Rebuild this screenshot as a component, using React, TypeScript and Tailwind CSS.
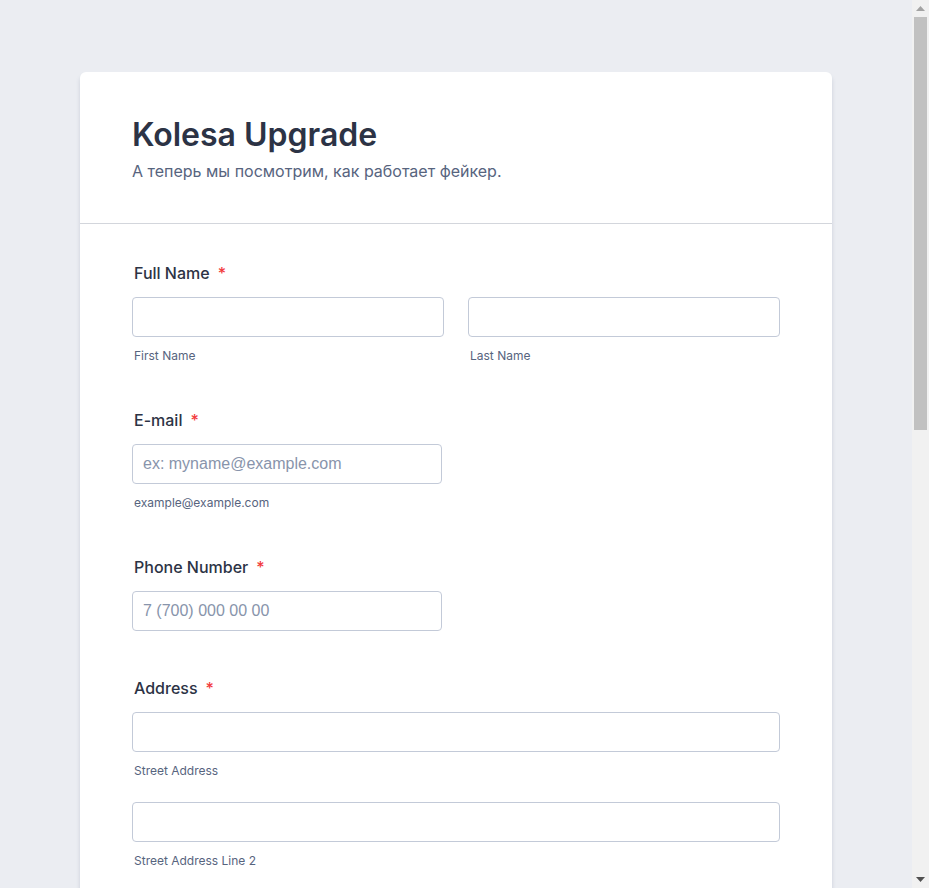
import React from "react";

type Part = { sub?: string; placeholder?: string; width?: string };

function Field({
  label,
  rows,
  required = true,
  className = "",
}: {
  label: string;
  rows: Part[][];
  required?: boolean;
  className?: string;
}) {
  return (
    <li className={`flex flex-col ${className}`}>
      <label className="pl-[2px] text-[16px] leading-[20px] font-medium text-[#2c3345]">
        {label}
        {required && <span className="ml-[8px] text-[#f23a3c]">*</span>}
      </label>
      <div className="mt-[14px] flex flex-col gap-[22px]">
        {rows.map((row, i) => (
          <div key={i} className="flex gap-6">
            {row.map((p, j) => (
              <div key={j} className={p.width ?? "flex-1"}>
                <input
                  type="text"
                  placeholder={p.placeholder}
                  className="block h-10 w-full rounded-[4px] border border-[#c3cad8] bg-white px-[10px] text-[16px] text-[#2c3345] placeholder:text-[#8894ab] font-['Liberation_Sans',Arial,sans-serif] outline-none"
                />
                {p.sub && (
                  <div className="mt-[10px] pl-[2px] text-[12px] leading-[18px] text-[#57647e]">{p.sub}</div>
                )}
              </div>
            ))}
          </div>
        ))}
      </div>
    </li>
  );
}

// полоса прокрутки, как в браузере на скриншоте
function Scrollbar() {
  return (
    <div className="fixed top-0 right-0 flex h-screen w-[17px] flex-col bg-[#f1f1f1]">
      <div className="flex h-[17px] items-center justify-center">
        <svg width="9" height="5" viewBox="0 0 9 5">
          <path d="M4.5 0 L9 5 L0 5 Z" fill="#a3a3a3" />
        </svg>
      </div>
      <div className="mx-[2px] h-[413px] bg-[#c1c1c1]" />
      <div className="flex-1" />
      <div className="flex h-[17px] items-center justify-center">
        <svg width="9" height="5" viewBox="0 0 9 5">
          <path d="M0 0 L9 0 L4.5 5 Z" fill="#505050" />
        </svg>
      </div>
    </div>
  );
}

export default function App() {
  return (
    <div className="min-h-screen bg-[#ebedf2] pt-[72px] pr-[17px] pb-[72px] font-['Inter','Noto_Sans',sans-serif]">
      <div className="mx-auto w-[752px] rounded-[6px] bg-white shadow-[0_4px_4px_rgba(87,100,126,0.21)]">
        {/* шапка формы */}
        <div className="border-b border-[#d3d6dc] px-[52px] pt-[43px] pb-[40px]">
          <h1 className="text-[32px] leading-[40px] font-semibold text-[#2c3345]">Kolesa Upgrade</h1>
          <p className="mt-[4px] text-[16px] leading-[24px] text-[#57647e]">
            А теперь мы посмотрим, как работает фейкер.
          </p>
        </div>

        <ul className="flex flex-col gap-[45px] px-[52px] pt-[39px] pb-[60px]">
          <Field label="Full Name" rows={[[{ sub: "First Name" }, { sub: "Last Name" }]]} />
          <Field
            label="E-mail"
            rows={[[{ placeholder: "ex: myname@example.com", sub: "example@example.com", width: "w-[310px]" }]]}
          />
          <Field label="Phone Number" rows={[[{ placeholder: "7 (700) 000 00 00", width: "w-[310px]" }]]} />
          <Field
            label="Address"
            className="mt-[2px]"
            rows={[
              [{ sub: "Street Address" }],
              [{ sub: "Street Address Line 2" }],
              [{ sub: "City" }, { sub: "State / Province" }],
              [{ sub: "Postal / Zip Code", width: "w-[312px]" }],
            ]}
          />
          <Field label="Company" required={false} rows={[[{ width: "w-[310px]" }]]} />
          <li className="flex flex-col">
            <label className="pl-[2px] text-[16px] leading-[20px] font-medium text-[#2c3345]">Comments</label>
            <textarea className="mt-[14px] h-[163px] w-full resize-none rounded-[4px] border border-[#c3cad8] outline-none" />
          </li>
          <li className="flex justify-center border-t border-[#d3d6dc] pt-[40px]">
            <button className="h-12 rounded-[4px] bg-[#18bd5b] px-[46px] text-[16px] font-medium text-white">
              Submit
            </button>
          </li>
        </ul>
      </div>
      <Scrollbar />
    </div>
  );
}
